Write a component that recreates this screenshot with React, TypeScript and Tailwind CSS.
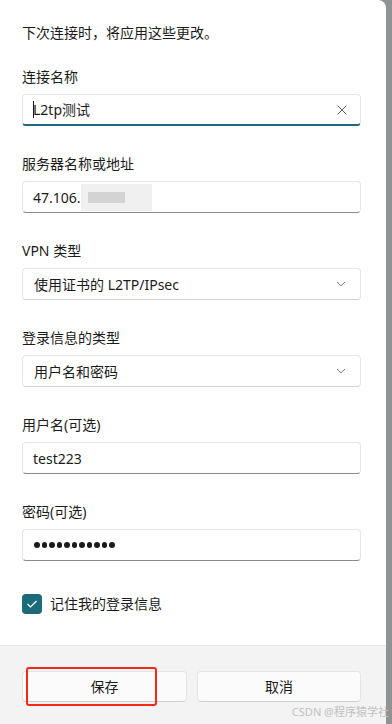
import React from "react";

const font = { fontFamily: '"Noto Sans", "Noto Sans CJK SC", sans-serif' };

function Label({ children }: { children: React.ReactNode }) {
  return <div className="h-[20px] text-[14px] leading-[20px] text-[#1b1b1b]">{children}</div>;
}

function TextBox({ children, focused, right }: { children: React.ReactNode; focused?: boolean; right?: React.ReactNode }) {
  return (
    <div
      className={
        "mt-[7px] h-[32px] w-[339px] rounded-[4px] bg-white border border-[#e6e6e6] flex items-center pl-[10px] pr-[12px] text-[14px] text-[#1b1b1b] " +
        (focused ? "border-b-2 border-b-[#1c6b7b]" : "border-b-[#8a8a8a]")
      }
    >
      <div className="flex-1 flex items-center">{children}</div>
      {right}
    </div>
  );
}

function Chevron() {
  return (
    <svg width="10" height="6" viewBox="0 0 10 6" className="mr-[2px]">
      <path d="M1 1 L5 4.8 L9 1" fill="none" stroke="#7a7a7a" strokeWidth="1" />
    </svg>
  );
}

function Select({ children }: { children: React.ReactNode }) {
  return (
    <div className="mt-[7px] h-[32px] w-[339px] rounded-[4px] bg-white border border-[#e6e6e6] border-b-[#d2d2d2] flex items-center pl-[11px] pr-[12px] text-[14px] text-[#1b1b1b]">
      <div className="flex-1">{children}</div>
      <Chevron />
    </div>
  );
}

export default function App() {
  return (
    <div className="relative w-[392px] h-[724px] bg-[#8f9393] flex overflow-hidden" style={font}>
      <div className="w-[386px] h-[724px] bg-white rounded-tr-[8px] flex flex-col overflow-hidden">
        <div className="flex-1 pl-[22px] pt-[23px]">
          <div className="h-[20px] text-[14px] leading-[20px] text-[#1b1b1b]">下次连接时，将应用这些更改。</div>

          <div className="mt-[24px]">
            <Label>连接名称</Label>
            <TextBox
              focused
              right={
                <svg width="10" height="10" viewBox="0 0 10 10" className="mr-[1px]">
                  <path d="M0.5 0.5 L9.5 9.5 M9.5 0.5 L0.5 9.5" stroke="#5f5f5f" strokeWidth="1" />
                </svg>
              }
            >
              <span className="inline-block w-[1px] h-[17px] bg-[#1b1b1b] mr-[-1px]" />
              <span>L2tp测试</span>
            </TextBox>
          </div>

          <div className="mt-[28px]">
            <Label>服务器名称或地址</Label>
            <TextBox>
              <span>47.106.</span>
              <div className="relative w-[71px] h-[27px] bg-[#f0f0f0] flex items-center">
                <div className="ml-[7px] w-[37px] h-[11px] bg-[#d3d3d3]" />
              </div>
            </TextBox>
          </div>

          <div className="mt-[28px]">
            <Label>VPN 类型</Label>
            <Select>使用证书的 L2TP/IPsec</Select>
          </div>

          <div className="mt-[28px]">
            <Label>登录信息的类型</Label>
            <Select>用户名和密码</Select>
          </div>

          <div className="mt-[28px]">
            <Label>用户名(可选)</Label>
            <TextBox>
              <span>test223</span>
            </TextBox>
          </div>

          <div className="mt-[28px]">
            <Label>密码(可选)</Label>
            <TextBox>
              <div className="flex items-center gap-[2px] pl-[1px]">
                {Array.from({ length: 11 }).map((_, i) => (
                  <span key={i} className="inline-block w-[5.5px] h-[5.5px] rounded-full bg-[#1b1b1b]" />
                ))}
              </div>
            </TextBox>
          </div>

          <div className="mt-[33px] flex items-center">
            <div className="w-[20px] h-[20px] rounded-[4px] bg-[#1c6b7b] flex items-center justify-center">
              <svg width="12" height="10" viewBox="0 0 12 10">
                <path d="M1.5 5 L4.5 8 L10.5 2" fill="none" stroke="#ffffff" strokeWidth="1.2" />
              </svg>
            </div>
            <span className="ml-[8px] text-[14px] leading-[20px] text-[#1b1b1b]">记住我的登录信息</span>
          </div>
        </div>

        <div className="h-[79px] bg-[#f3f3f3] border-t border-[#e5e5e5] pl-[22px] pt-[25px]">
          <div className="flex gap-[10px]">
            <div className="relative">
              <div className="w-[165px] h-[31px] rounded-[4px] bg-[#fbfbfb] border border-[#e5e5e5] border-b-[#d0d0d0] flex items-center justify-center text-[14px] text-[#1b1b1b]">
                保存
              </div>
              <div className="absolute left-[4px] top-[-4px] w-[131px] h-[39px] border-2 border-[#f5281c] rounded-[3px]" />
            </div>
            <div className="w-[164px] h-[31px] rounded-[4px] bg-[#fbfbfb] border border-[#e5e5e5] border-b-[#d0d0d0] flex items-center justify-center text-[14px] text-[#1b1b1b]">
              取消
            </div>
          </div>
        </div>
      </div>
      <div className="absolute right-[3px] top-[705px] text-[11px] leading-[14px] text-[#c2c2c2] whitespace-nowrap">CSDN @程序猿学社</div>
    </div>
  );
}
